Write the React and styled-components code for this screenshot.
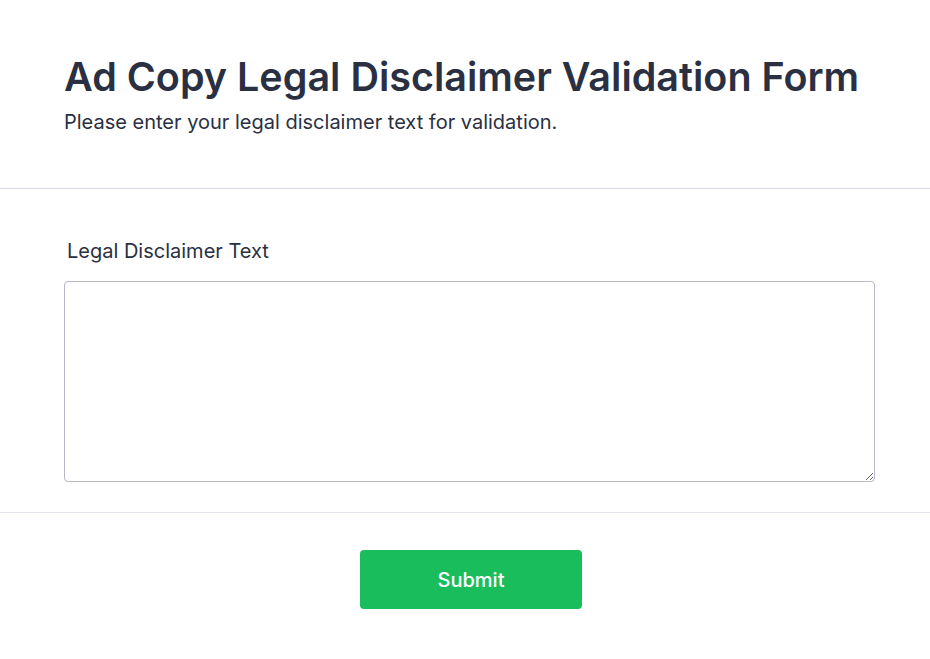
import React from "react";
import styled, { createGlobalStyle } from "styled-components";

const GlobalStyle = createGlobalStyle`
  body {
    margin: 0;
    background: #ffffff;
    font-family: Inter, "Noto Sans", sans-serif;
    color: #2a3042;
  }
`;

const Page = styled.div`
  width: 930px;
`;

const Header = styled.header`
  padding: 54px 64px 52px;
  border-bottom: 1px solid #dcdce8;
`;

const Title = styled.h1`
  margin: 0;
  font-size: 39.5px;
  font-weight: 600;
  line-height: 46px;
  white-space: nowrap;
  color: #2a3042;
`;

const Subtitle = styled.p`
  margin: 8px 0 0;
  font-size: 20px;
  font-weight: 400;
  line-height: 28px;
  color: #2a3042;
`;

const Body = styled.section`
  padding: 48px 55px 30px 64px;
  border-bottom: 1px solid #e4e4ef;
`;

const Label = styled.label`
  display: block;
  margin: 0 0 16px 3px;
  font-size: 20px;
  line-height: 28px;
  color: #2a3042;
`;

const TextArea = styled.textarea`
  display: block;
  box-sizing: border-box;
  width: 100%;
  height: 201px;
  border: 1px solid #b8b8c8;
  border-radius: 4px;
  font-family: inherit;
  font-size: 16px;
  padding: 8px 10px;
  resize: vertical;
  outline: none;
`;

const Footer = styled.footer`
  display: flex;
  justify-content: center;
  padding: 37px 0 50px 12px;
`;

const SubmitButton = styled.button`
  width: 222px;
  height: 59px;
  border: none;
  border-radius: 4px;
  background: #1abd5c;
  color: #ffffff;
  font-family: inherit;
  font-size: 20px;
  font-weight: 500;
  cursor: pointer;
`;

export default function App() {
  return (
    <Page>
      <GlobalStyle />
      <Header>
        <Title>Ad Copy Legal Disclaimer Validation Form</Title>
        <Subtitle>Please enter your legal disclaimer text for validation.</Subtitle>
      </Header>
      <Body>
        <Label htmlFor="disclaimer">Legal Disclaimer Text</Label>
        <TextArea id="disclaimer" />
      </Body>
      <Footer>
        <SubmitButton type="button">Submit</SubmitButton>
      </Footer>
    </Page>
  );
}
